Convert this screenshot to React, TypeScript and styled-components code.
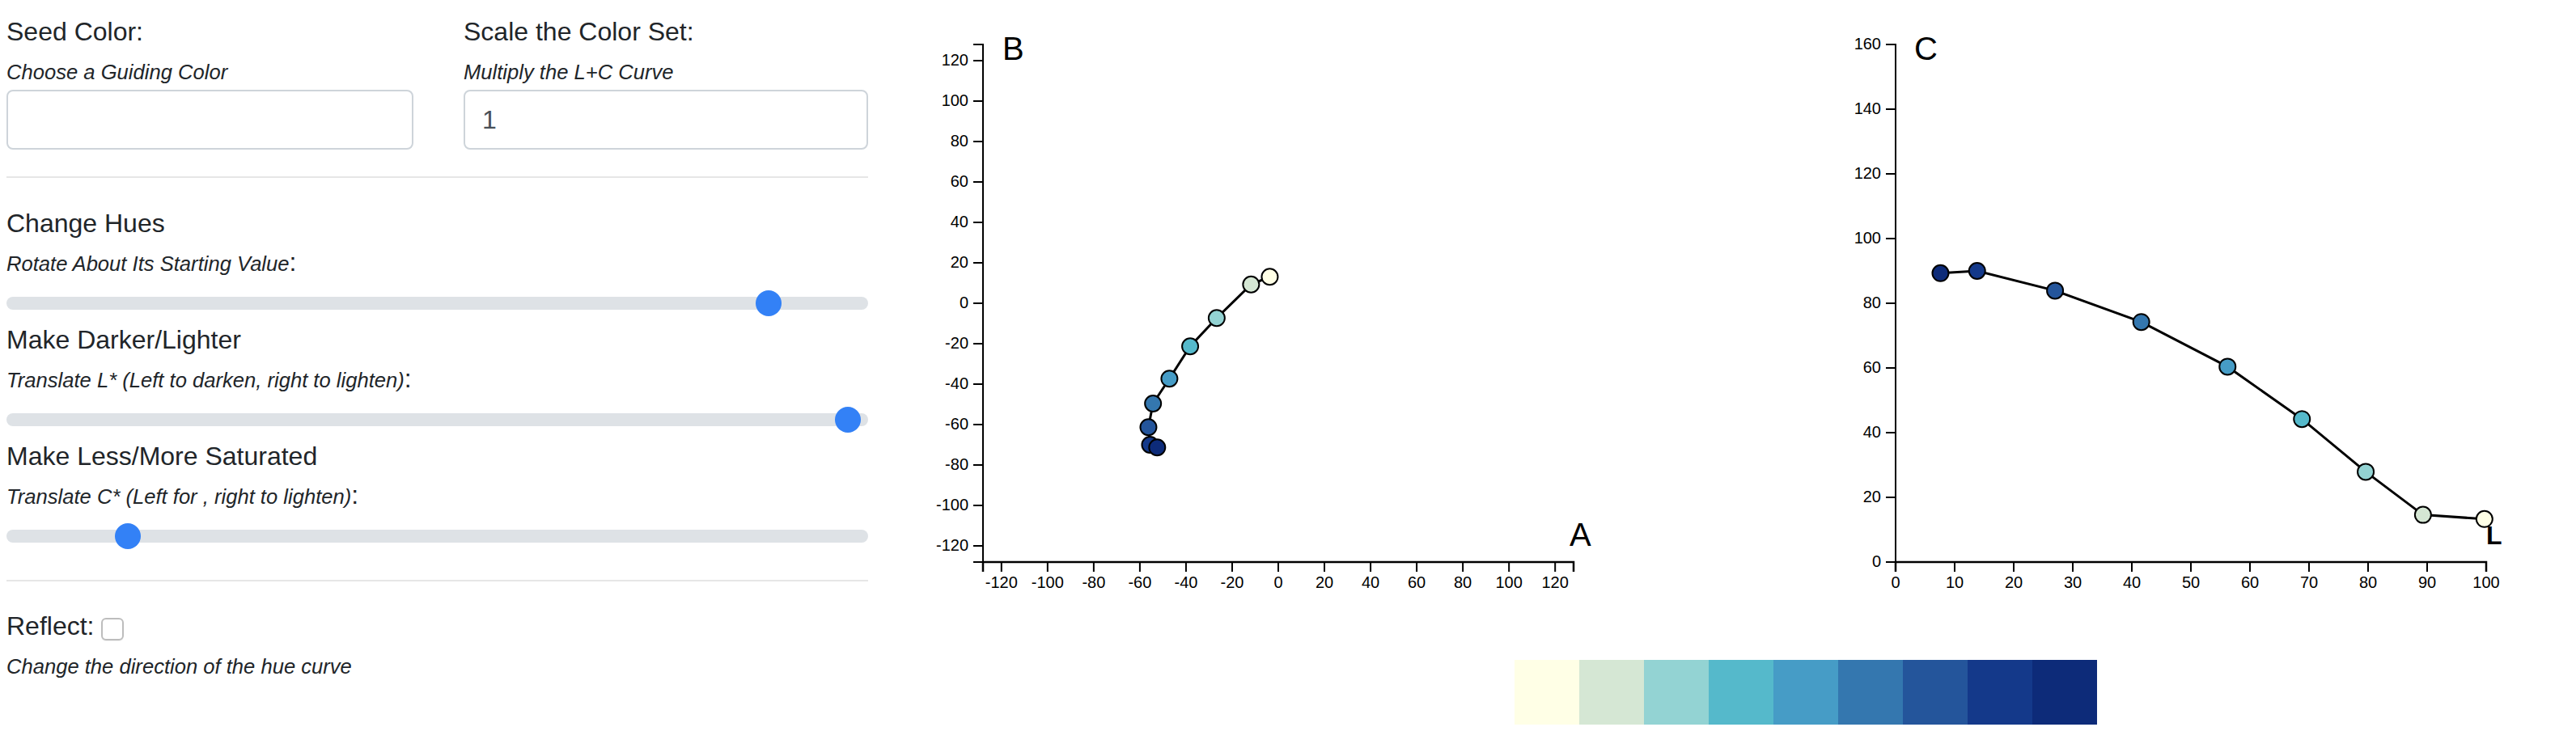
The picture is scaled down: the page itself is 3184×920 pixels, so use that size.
import React from "react";
import styled, { createGlobalStyle } from "styled-components";

const GlobalStyle = createGlobalStyle`
  html, body { margin: 0; padding: 0; background: #fff; }
  body { font-family: "Liberation Sans", Arial, sans-serif; color: #212529; }
  * { box-sizing: border-box; }
`;

const palette = [
  "#ffffe6",
  "#d5e7d4",
  "#93d3d3",
  "#55b9cb",
  "#469cc6",
  "#3477af",
  "#24559b",
  "#14398a",
  "#0d2b79",
];

// a*, b* of each colour, light to dark
const abPoints: [number, number][] = [
  [-3.7, 13.1],
  [-11.8, 9.3],
  [-26.7, -7.3],
  [-38.2, -21.3],
  [-47.2, -37.3],
  [-54.3, -49.6],
  [-56.3, -61.3],
  [-55.6, -70],
  [-52.5, -71.3],
];

// L*, C* of each colour, light to dark
const lcPoints: [number, number][] = [
  [99.7, 13.3],
  [89.3, 14.6],
  [79.6, 27.9],
  [68.8, 44.2],
  [56.2, 60.4],
  [41.6, 74.2],
  [27.0, 83.9],
  [13.8, 90],
  [7.6, 89.3],
];

const range = (from: number, to: number, step: number) => {
  const out: number[] = [];
  for (let v = from; v <= to; v += step) out.push(v);
  return out;
};

const Page = styled.div`
  display: flex;
  align-items: flex-start;
  width: 3184px;
  height: 920px;
  overflow: hidden;
`;

const Controls = styled.div`
  flex-shrink: 0;
  width: 1065px;
  margin-left: 8px;
  padding-top: 15px;
  display: flex;
  flex-direction: column;
`;

const FieldGrid = styled.div`
  display: grid;
  grid-template-columns: 503px 500px;
  column-gap: 62px;
`;

const Field = styled.div`
  display: flex;
  flex-direction: column;
`;

const Heading = styled.div<{ $gap?: number }>`
  font-size: 32px;
  line-height: 48px;
  margin-top: ${(p) => p.$gap ?? 0}px;
  white-space: nowrap;
`;

const Hint = styled.div`
  font-size: 32px;
  line-height: 36px;
  margin-top: 6px;
  white-space: nowrap;

  em {
    font-size: 25.6px;
    line-height: 1;
  }
`;

const TextInput = styled.input`
  display: block;
  margin-top: 6px;
  width: 100%;
  height: 74px;
  padding: 0 21px;
  border: 2px solid #ced4da;
  border-radius: 8px;
  background: #fff;
  font-family: inherit;
  font-size: 32px;
  color: #495057;
  outline: none;
`;

const Divider = styled.hr<{ $top: number }>`
  border: 0;
  border-top: 2px solid #e6e6e6;
  margin: ${(p) => p.$top}px 0 0;
`;

const Range = styled.input`
  -webkit-appearance: none;
  appearance: none;
  display: block;
  width: 100%;
  height: 32px;
  margin: 17px 0 0;
  background: transparent;

  &::-webkit-slider-runnable-track {
    height: 16px;
    border-radius: 16px;
    background: #dee2e6;
  }

  &::-webkit-slider-thumb {
    -webkit-appearance: none;
    appearance: none;
    width: 32px;
    height: 32px;
    margin-top: -8px;
    border: 0;
    border-radius: 50%;
    background: #3381f6;
  }
`;

const Check = styled.input`
  -webkit-appearance: none;
  appearance: none;
  width: 28px;
  height: 28px;
  margin: 0;
  border: 2px solid #bdbdbd;
  border-radius: 6px;
  background: #fff;
  vertical-align: -7px;
  box-shadow: 0 1px 1px rgba(0, 0, 0, 0.06);
`;

const Visuals = styled.div`
  flex-shrink: 0;
  margin-left: 27px;
  display: flex;
  flex-direction: column;
`;

const ChartRow = styled.div`
  display: flex;
  gap: 128px;
`;

const ChartSvg = styled.svg`
  display: block;
  flex-shrink: 0;
  font-family: "Liberation Sans", Arial, sans-serif;
`;

const TickText = styled.text`
  font-size: 20px;
  fill: #000;
`;

const Letter = styled.text<{ $size: number; $bold?: boolean }>`
  font-size: ${(p) => p.$size}px;
  font-weight: ${(p) => (p.$bold ? 700 : 400)};
  fill: #000;
`;

const Swatches = styled.div`
  display: flex;
  margin: 56px 0 0 772px;
`;

const Swatch = styled.div<{ $color: string }>`
  width: 80px;
  height: 80px;
  background: ${(p) => p.$color};
`;

const LEFT = 115;
const RIGHT = 845;
const TOP = 55;
const BOTTOM = 695;

type AxisLabel = { text: string; x: number; y: number; size: number; bold?: boolean };

type ChartProps = {
  width: number;
  xDomain: [number, number];
  yDomain: [number, number];
  xTicks: number[];
  yTicks: number[];
  points: [number, number][];
  corner: AxisLabel;
  side: AxisLabel;
};

const Chart = ({ width, xDomain, yDomain, xTicks, yTicks, points, corner, side }: ChartProps) => {
  const sx = (v: number) => LEFT + ((v - xDomain[0]) / (xDomain[1] - xDomain[0])) * (RIGHT - LEFT);
  const sy = (v: number) => BOTTOM - ((v - yDomain[0]) / (yDomain[1] - yDomain[0])) * (BOTTOM - TOP);
  const line = points.map(([x, y]) => `${sx(x)},${sy(y)}`).join(" ");

  return (
    <ChartSvg width={width} height={760}>
      <path d={`M${LEFT - 12},${TOP}H${LEFT}V${BOTTOM}H${LEFT - 12}`} fill="none" stroke="#000" strokeWidth={2} />
      {yTicks.map((t) => (
        <g key={`y${t}`}>
          <line x1={LEFT - 12} x2={LEFT} y1={sy(t)} y2={sy(t)} stroke="#000" strokeWidth={2} />
          <TickText x={LEFT - 18} y={sy(t)} dy="0.32em" textAnchor="end">
            {t}
          </TickText>
        </g>
      ))}
      <path d={`M${LEFT},${BOTTOM + 12}V${BOTTOM}H${RIGHT}V${BOTTOM + 12}`} fill="none" stroke="#000" strokeWidth={2.5} />
      {xTicks.map((t) => (
        <g key={`x${t}`}>
          <line x1={sx(t)} x2={sx(t)} y1={BOTTOM} y2={BOTTOM + 12} stroke="#000" strokeWidth={2} />
          <TickText x={sx(t)} y={BOTTOM + 18} dy="0.71em" textAnchor="middle">
            {t}
          </TickText>
        </g>
      ))}
      <Letter x={corner.x} y={corner.y} $size={corner.size} $bold={corner.bold}>
        {corner.text}
      </Letter>
      <Letter x={side.x} y={side.y} $size={side.size} $bold={side.bold}>
        {side.text}
      </Letter>
      <polyline points={line} fill="none" stroke="#000" strokeWidth={3} />
      {points.map(([x, y], i) => (
        <circle key={i} cx={sx(x)} cy={sy(y)} r={10} fill={palette[i]} stroke="#000" strokeWidth={2} />
      ))}
    </ChartSvg>
  );
};

const SliderBlock = ({ title, hint, value, first }: { title: string; hint: string; value: number; first?: boolean }) => (
  <>
    <Heading $gap={first ? 32 : 5}>{title}</Heading>
    <Hint>
      <em>{hint}</em>:
    </Hint>
    <Range type="range" min={0} max={100} step="any" defaultValue={value} />
  </>
);

export default function App() {
  return (
    <>
      <GlobalStyle />
      <Page>
        <Controls>
          <FieldGrid>
            <Field>
              <Heading>Seed Color:</Heading>
              <Hint>
                <em>Choose a Guiding Color</em>
              </Hint>
              <TextInput type="text" defaultValue="" />
            </Field>
            <Field>
              <Heading>Scale the Color Set:</Heading>
              <Hint>
                <em>Multiply the L+C Curve</em>
              </Hint>
              <TextInput type="text" defaultValue="1" />
            </Field>
          </FieldGrid>
          <Divider $top={33} />
          <SliderBlock first title="Change Hues" hint="Rotate About Its Starting Value" value={89.6} />
          <SliderBlock title="Make Darker/Lighter" hint="Translate L* (Left to darken, right to lighten)" value={99.1} />
          <SliderBlock title="Make Less/More Saturated" hint="Translate C* (Left for , right to lighten)" value={13} />
          <Divider $top={38} />
          <Heading $gap={31}>
            Reflect: <Check type="checkbox" />
          </Heading>
          <Hint>
            <em>Change the direction of the hue curve</em>
          </Hint>
        </Controls>
        <Visuals>
          <ChartRow>
            <Chart
              width={1000}
              xDomain={[-128, 128]}
              yDomain={[-128, 128]}
              xTicks={range(-120, 120, 20)}
              yTicks={range(-120, 120, 20)}
              points={abPoints}
              corner={{ text: "B", x: 139, y: 74, size: 40 }}
              side={{ text: "A", x: 840, y: 675, size: 40 }}
            />
            <Chart
              width={956}
              xDomain={[0, 100]}
              yDomain={[0, 160]}
              xTicks={range(0, 100, 10)}
              yTicks={range(0, 160, 20)}
              points={lcPoints}
              corner={{ text: "C", x: 138, y: 74, size: 40 }}
              side={{ text: "L", x: 845, y: 673, size: 32, bold: true }}
            />
          </ChartRow>
          <Swatches>
            {palette.map((c) => (
              <Swatch key={c} $color={c} />
            ))}
          </Swatches>
        </Visuals>
      </Page>
    </>
  );
}
